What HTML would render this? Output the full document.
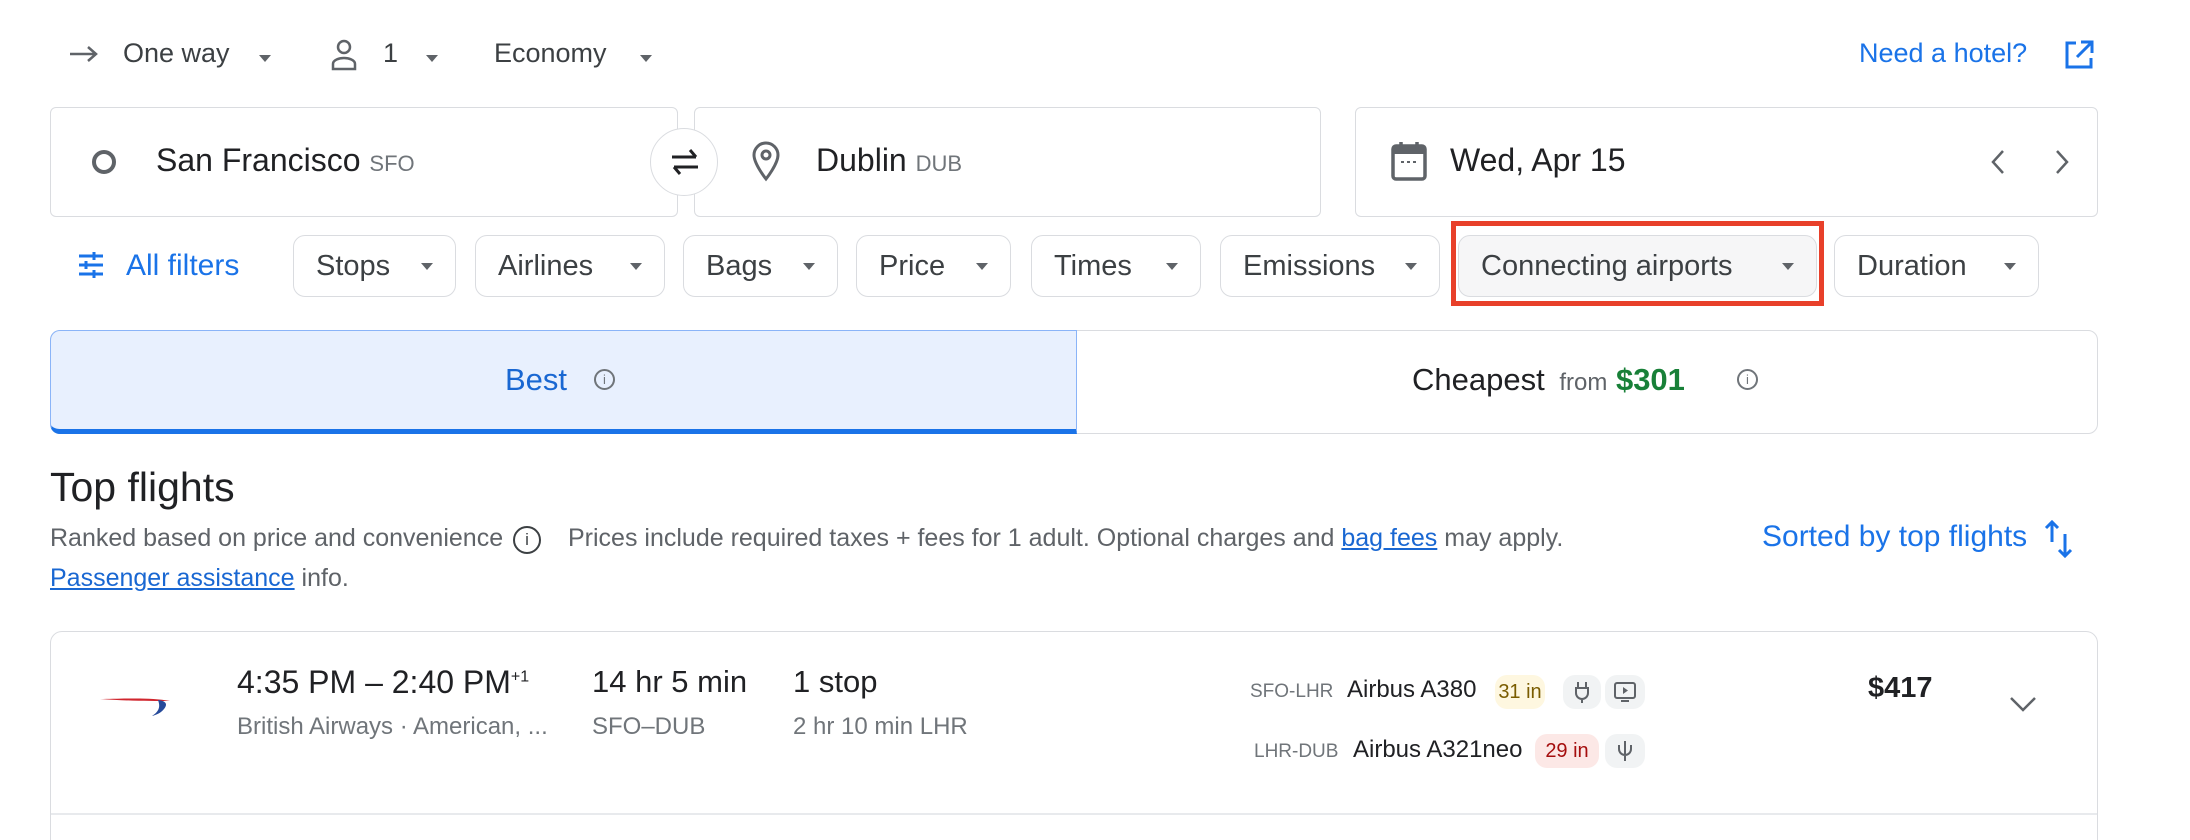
<!DOCTYPE html>
<html><head><meta charset="utf-8"><style>
*{margin:0;padding:0;box-sizing:border-box}
html,body{width:2190px;height:840px;overflow:hidden}
body{background:#fff;font-family:"Liberation Sans",Arial,sans-serif;color:#3c4043;position:relative}
.a{position:absolute;white-space:nowrap}
.box{position:absolute;border:1.5px solid #dadce0;border-radius:6px;background:#fff}
.chip{position:absolute;top:235px;height:62px;border:1.5px solid #dadce0;border-radius:12px;font-size:29px;color:#3c4043;display:flex;align-items:center;padding-left:22px}
.chip .t{position:absolute;right:22px;top:27px;width:0;height:0;border-left:6px solid transparent;border-right:6px solid transparent;border-top:7px solid #5f6368}
.tri{display:inline-block;width:0;height:0;border-left:6px solid transparent;border-right:6px solid transparent;border-top:7px solid #5f6368;vertical-align:middle}
.badge{position:absolute;height:34px;border-radius:12px;font-size:20px;display:flex;align-items:center;justify-content:center}
</style></head><body>

<!-- top row -->
<svg class="a" style="left:68px;top:42px" width="32" height="24" viewBox="0 0 32 24"><path d="M2 12H28M20 5l8 7-8 7" stroke="#5f6368" stroke-width="2.5" fill="none"/></svg>
<div class="a" style="left:123px;top:38px;font-size:27px">One way</div>
<div class="a" style="left:259px;top:50px"><span class="tri"></span></div>
<svg class="a" style="left:329px;top:38px" width="30" height="34" viewBox="0 0 30 34"><circle cx="15" cy="9" r="6" stroke="#5f6368" stroke-width="2.5" fill="none"/><path d="M4 31v-5c0-4 6-6 11-6s11 2 11 6v5z" stroke="#5f6368" stroke-width="2.5" fill="none"/></svg>
<div class="a" style="left:383px;top:38px;font-size:27px">1</div>
<div class="a" style="left:426px;top:50px"><span class="tri"></span></div>
<div class="a" style="left:494px;top:38px;font-size:27px">Economy</div>
<div class="a" style="left:640px;top:50px"><span class="tri"></span></div>
<div class="a" style="left:1859px;top:38px;font-size:27px;color:#1a73e8">Need a hotel?</div>
<svg class="a" style="left:2062px;top:38px" width="34" height="34" viewBox="0 0 34 34"><path d="M14 5H5v24h24v-9M19 4h11v11M30 4L15 19" stroke="#1a73e8" stroke-width="3" fill="none"/></svg>

<!-- inputs -->
<div class="box" style="left:50px;top:107px;width:628px;height:110px"></div>
<div class="box" style="left:694px;top:107px;width:627px;height:110px"></div>
<div class="box" style="left:1355px;top:107px;width:743px;height:110px"></div>
<div class="a" style="left:650px;top:128px;width:68px;height:68px;border-radius:50%;border:1.5px solid #dadce0;background:#fff"></div>
<svg class="a" style="left:666px;top:144px" width="38" height="36" viewBox="0 0 38 36"><path d="M6 13H30M24 6l6 7M8 23H32M8 23l6 7" stroke="#202124" stroke-width="3" fill="none"/></svg>
<div class="a" style="left:92px;top:150px;width:24px;height:24px;border:4px solid #5f6368;border-radius:50%"></div>
<div class="a" style="left:156px;top:142px;font-size:32px;color:#202124">San Francisco <span style="font-size:22px;color:#70757a">SFO</span></div>
<svg class="a" style="left:750px;top:140px" width="32" height="42" viewBox="0 0 32 42"><path d="M16 39C16 39 4 24 4 15a12 12 0 0124 0c0 9-12 24-12 24z" stroke="#5f6368" stroke-width="3" fill="none"/><circle cx="16" cy="15" r="4" stroke="#5f6368" stroke-width="3" fill="none"/></svg>
<div class="a" style="left:816px;top:142px;font-size:32px;color:#202124">Dublin <span style="font-size:22px;color:#70757a">DUB</span></div>
<svg class="a" style="left:1390px;top:140px" width="38" height="42" viewBox="0 0 38 42"><rect x="3" y="6" width="32" height="33" rx="3" stroke="#5f6368" stroke-width="3.5" fill="none"/><rect x="3" y="6" width="32" height="8" fill="#5f6368"/><path d="M11 2v7M27 2v7" stroke="#5f6368" stroke-width="3.5"/><path d="M11 22h3M17 22h3M23 22h3" stroke="#5f6368" stroke-width="2"/></svg>
<div class="a" style="left:1450px;top:142px;font-size:32px;color:#202124">Wed, Apr 15</div>
<svg class="a" style="left:1988px;top:148px" width="20" height="28" viewBox="0 0 20 28"><path d="M15 3L5 14l10 11" stroke="#5f6368" stroke-width="2.5" fill="none"/></svg>
<svg class="a" style="left:2052px;top:148px" width="20" height="28" viewBox="0 0 20 28"><path d="M5 3l10 11L5 25" stroke="#5f6368" stroke-width="2.5" fill="none"/></svg>

<!-- filters -->
<svg class="a" style="left:77px;top:251px" width="28" height="28" viewBox="0 0 28 28"><path d="M2 5h24M2 14h24M2 23h24" stroke="#1a73e8" stroke-width="3"/><path d="M17 1v8M9 10v8M17 19v8" stroke="#1a73e8" stroke-width="3"/></svg>
<div class="a" style="left:126px;top:249px;font-size:30px;color:#1a73e8">All filters</div>
<div class="chip" style="left:293px;width:163px">Stops<span class="t"></span></div>
<div class="chip" style="left:475px;width:190px">Airlines<span class="t"></span></div>
<div class="chip" style="left:683px;width:155px">Bags<span class="t"></span></div>
<div class="chip" style="left:856px;width:155px">Price<span class="t"></span></div>
<div class="chip" style="left:1031px;width:170px">Times<span class="t"></span></div>
<div class="chip" style="left:1220px;width:220px">Emissions<span class="t"></span></div>
<div class="chip" style="left:1458px;width:359px;background:#f6f6f7">Connecting airports<span class="t"></span></div>
<div class="chip" style="left:1834px;width:205px">Duration<span class="t"></span></div>
<div class="a" style="left:1451px;top:221px;width:373px;height:85px;border:5px solid #e8402a"></div>

<!-- tabs -->
<div class="box" style="left:50px;top:330px;width:2048px;height:104px;border-radius:10px"></div>
<div class="a" style="left:50px;top:330px;width:1027px;height:104px;background:#e8f0fe;border:1.5px solid #8ab4f8;border-radius:10px 0 0 10px;border-bottom:5px solid #1a73e8"></div>
<div class="a" style="left:505px;top:362px;font-size:31px;color:#1967d2">Best</div>
<div class="a" style="left:594px;top:369px;width:21px;height:21px;border:2px solid #70757a;border-radius:50%;font-size:13px;text-align:center;line-height:17px;color:#70757a">i</div>
<div class="a" style="left:1412px;top:362px;font-size:31px;color:#202124">Cheapest <span style="font-size:24px;color:#5f6368;margin-left:6px">from</span> <span style="color:#188038;font-weight:bold">$301</span></div>
<div class="a" style="left:1737px;top:369px;width:21px;height:21px;border:2px solid #70757a;border-radius:50%;font-size:13px;text-align:center;line-height:17px;color:#70757a">i</div>

<!-- top flights -->
<div class="a" style="left:50px;top:464px;font-size:41px;color:#202124">Top flights</div>
<div class="a" style="left:50px;top:524px;font-size:25px;color:#5f6368">Ranked based on price and convenience</div>
<div class="a" style="left:513px;top:526px;width:28px;height:28px;border:2.5px solid #3c4043;border-radius:50%;font-size:17px;text-align:center;line-height:23px;color:#3c4043">i</div>
<div class="a" style="left:568px;top:524px;font-size:25px;color:#5f6368">Prices include required taxes + fees for 1 adult. Optional charges and <span style="color:#1967d2;text-decoration:underline">bag fees</span> may apply.</div>
<div class="a" style="left:50px;top:564px;font-size:25px;color:#5f6368"><span style="color:#1967d2;text-decoration:underline">Passenger assistance</span> info.</div>
<div class="a" style="left:1762px;top:520px;font-size:30px;color:#1a73e8">Sorted by top flights</div>
<svg class="a" style="left:2042px;top:518px" width="34" height="42" viewBox="0 0 34 42"><path d="M10 24V4M4 10l6-6 6 6M23 16v22M17 32l6 6 6-6" stroke="#1a73e8" stroke-width="3" fill="none"/></svg>

<!-- card -->
<div class="box" style="left:50px;top:631px;width:2048px;height:240px;border-radius:12px"></div>
<div class="a" style="left:51px;top:813px;width:2046px;height:2px;background:#e8eaed"></div>
<svg class="a" style="left:98px;top:694px" width="74" height="26" viewBox="0 0 74 26"><path d="M2 5c20 0 50-2 70 2-20 0-40 0-70-2z" fill="#d0262e"/><path d="M60 6c8 1 10 4 6 9-3 4-8 6-12 7 6-4 9-8 6-16z" fill="#264a9a"/></svg>
<div class="a" style="left:237px;top:664px;font-size:32px;color:#202124">4:35 PM – 2:40 PM<sup style="font-size:16px">+1</sup></div>
<div class="a" style="left:237px;top:713px;font-size:24px;color:#70757a">British Airways · American, ...</div>
<div class="a" style="left:592px;top:664px;font-size:31px;color:#202124">14 hr 5 min</div>
<div class="a" style="left:592px;top:713px;font-size:24px;color:#70757a">SFO–DUB</div>
<div class="a" style="left:793px;top:664px;font-size:31px;color:#202124">1 stop</div>
<div class="a" style="left:793px;top:713px;font-size:24px;color:#70757a">2 hr 10 min LHR</div>

<div class="a" style="left:1250px;top:681px;font-size:19px;color:#70757a">SFO-LHR</div>
<div class="a" style="left:1347px;top:676px;font-size:24px;color:#202124">Airbus A380</div>
<div class="badge" style="left:1495px;top:675px;width:50px;background:#fef7e0;color:#7a5c00">31 in</div>
<div class="badge" style="left:1563px;top:675px;width:38px;background:#f1f3f4;color:#5f6368">
<svg width="18" height="24" viewBox="0 0 18 24"><path d="M5 2v6M13 2v6M3 8h12v5a6 6 0 01-12 0zM9 19v4" stroke="#5f6368" stroke-width="2" fill="none"/></svg></div>
<div class="badge" style="left:1605px;top:675px;width:40px;background:#f1f3f4">
<svg width="24" height="22" viewBox="0 0 24 22"><rect x="2" y="2" width="20" height="15" rx="2" stroke="#5f6368" stroke-width="2" fill="none"/><path d="M10 6l5 3.5-5 3.5z" fill="#5f6368"/><path d="M8 20h8" stroke="#5f6368" stroke-width="2"/></svg></div>

<div class="a" style="left:1254px;top:741px;font-size:19px;color:#70757a">LHR-DUB</div>
<div class="a" style="left:1353px;top:736px;font-size:24px;color:#202124">Airbus A321neo</div>
<div class="badge" style="left:1535px;top:734px;width:64px;background:#fce8e6;color:#a50e0e">29 in</div>
<div class="badge" style="left:1605px;top:734px;width:40px;background:#f1f3f4">
<svg width="18" height="24" viewBox="0 0 18 24"><path d="M9 2v20M3 6v4a6 6 0 0012 0V6" stroke="#5f6368" stroke-width="2" fill="none"/></svg></div>

<div class="a" style="left:1868px;top:672px;font-size:29px;font-weight:bold;color:#202124">$417</div>
<svg class="a" style="left:2008px;top:694px" width="30" height="20" viewBox="0 0 30 20"><path d="M3 4l12 12L27 4" stroke="#5f6368" stroke-width="2.5" fill="none"/></svg>
</body></html>
